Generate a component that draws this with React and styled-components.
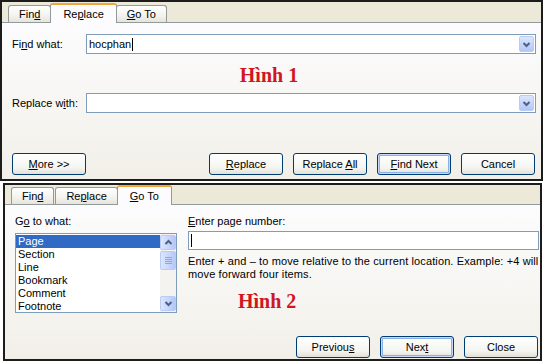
import React from 'react'
import styled, { createGlobalStyle, css } from 'styled-components'

const GlobalStyle = createGlobalStyle`
  html, body {
    margin: 0;
    padding: 0;
    background: #ffffff;
  }
  body {
    font-family: "Liberation Sans", Tahoma, sans-serif;
    font-size: 11px;
    color: #000;
  }
`

const Chevron = ({ up }) => (
  <svg width="9" height="7" viewBox="0 0 9 7">
    <path
      d={up ? 'M1.5 5 L4.5 2 L7.5 5' : 'M1.5 2 L4.5 5 L7.5 2'}
      fill="none"
      stroke="#4D6185"
      strokeWidth="2"
    />
  </svg>
)

const GotoItems = ['Page', 'Section', 'Line', 'Bookmark', 'Comment', 'Footnote']

const App = () => {
  return (
    <>
      <GlobalStyle />
      <Page>
        {/* Hình 1 : Find and Replace, Replace tab */}
        <Dialog $width={543} $margin="0">
          <TabStrip $h={20}>
            <Tab>Fin<Key>d</Key></Tab>
            <Tab $active>Re<Key>p</Key>lace</Tab>
            <Tab><Key>G</Key>o To</Tab>
          </TabStrip>
          <Panel $pad="11px 5px 4px 10px">
            <Row>
              <Label $w={74}>Fi<Key>n</Key>d what:</Label>
              <Combo>
                hocphan<Caret />
                <DropButton><Chevron /></DropButton>
              </Combo>
            </Row>
            <Caption $h={39} $pad="3px 10px 0 0">Hình 1</Caption>
            <Row>
              <Label $w={74}>Replace w<Key>i</Key>th:</Label>
              <Combo>
                <DropButton><Chevron /></DropButton>
              </Combo>
            </Row>
            <ButtonBar $mt={40} $pr={1}>
              <Button><Key>M</Key>ore &gt;&gt;</Button>
              <Button $push><Key>R</Key>eplace</Button>
              <Button>Replace <Key>A</Key>ll</Button>
              <Button $default><Key>F</Key>ind Next</Button>
              <Button>Cancel</Button>
            </ButtonBar>
          </Panel>
        </Dialog>

        {/* Hình 2 : Go To tab */}
        <Dialog $width={539} $margin="2px 0 0 3px">
          <TabStrip $h={19}>
            <Tab>Fin<Key>d</Key></Tab>
            <Tab>Re<Key>p</Key>lace</Tab>
            <Tab $active><Key>G</Key>o To</Tab>
          </TabStrip>
          <Panel $pad="10px 1px 1px 10px">
            <GoToBody>
              <LeftCol>
                <FieldLabel>G<Key>o</Key> to what:</FieldLabel>
                <ListBox>
                  <Items>
                    {GotoItems.map((item, i) => (
                      <ListItem key={item} $selected={i === 0}>{item}</ListItem>
                    ))}
                  </Items>
                  <ScrollBar>
                    <ScrollBtn><Chevron up /></ScrollBtn>
                    <Track>
                      <Thumb>
                        <Grip /><Grip /><Grip /><Grip />
                      </Thumb>
                    </Track>
                    <ScrollBtn><Chevron /></ScrollBtn>
                  </ScrollBar>
                </ListBox>
              </LeftCol>
              <RightCol>
                <FieldLabel><Key>E</Key>nter page number:</FieldLabel>
                <PageInput><Caret /></PageInput>
                <Help>
                  Enter + and – to move relative to the current location. Example: +4 will
                  <br />
                  move forward four items.
                </Help>
                <Caption $h={24} $pad="0 0 0 50px" $align="left" $mt={10}>Hình 2</Caption>
              </RightCol>
            </GoToBody>
            <ButtonBar $mt={21} $pr={1}>
              <Button $push>Previou<Key>s</Key></Button>
              <Button $default>Nex<Key>t</Key></Button>
              <Button>Close</Button>
            </ButtonBar>
          </Panel>
        </Dialog>
      </Page>
    </>
  )
}

const Page = styled.div`
  width: 545px;
  height: 364px;
  display: flex;
  flex-direction: column;
  overflow: hidden;
  background: #fff;
`

const Dialog = styled.div`
  box-sizing: border-box;
  width: ${props => props.$width}px;
  margin: ${props => props.$margin};
  border: 2px solid #1c1c1c;
  background: #ECE9D8;
  display: flex;
  flex-direction: column;
`

const TabStrip = styled.div`
  height: ${props => props.$h}px;
  display: flex;
  align-items: flex-end;
  padding-left: 6px;
  position: relative;
  z-index: 1;
`

const Tab = styled.div`
  box-sizing: border-box;
  height: 17px;
  padding: 0 10px;
  margin-right: 1px;
  display: flex;
  align-items: center;
  border: 1px solid #919B9C;
  border-bottom: none;
  border-radius: 3px 3px 0 0;
  background: linear-gradient(180deg, #FFFFFF 0%, #F3F2EE 60%, #E6E4DA 100%);

  ${props => props.$active && css`
    height: 20px;
    margin: 0 -1px -1px -2px;
    padding: 0 12px;
    border-top: 2px solid #F2A53A;
    background: #FCFCFE;
  `}
`

const Panel = styled.div`
  flex: 1;
  padding: ${props => props.$pad};
  border-top: 1px solid #919B9C;
  background: linear-gradient(180deg, #FCFCFE 0%, #F6F5F1 60%, #F1EFE8 100%);
  display: flex;
  flex-direction: column;
`

const Row = styled.div`
  height: 20px;
  display: flex;
  align-items: center;
`

const Label = styled.div`
  width: ${props => props.$w}px;
  flex: none;
`

const Key = styled.span`
  text-decoration: underline;
  text-underline-offset: 1px;
`

const Combo = styled.div`
  flex: 1;
  height: 20px;
  box-sizing: border-box;
  border: 1px solid #7F9DB9;
  background: #fff;
  display: flex;
  align-items: center;
  padding-left: 2px;
`

const Caret = styled.span`
  display: inline-block;
  width: 1px;
  height: 13px;
  margin-left: 1px;
  background: #000;
`

const DropButton = styled.div`
  margin-left: auto;
  margin-right: 1px;
  width: 15px;
  height: 16px;
  box-sizing: border-box;
  border: 1px solid #BACBF4;
  border-radius: 2px;
  background: linear-gradient(180deg, #DCE6FC 0%, #C3D3FB 60%, #B3C6F4 100%);
  display: grid;
  place-items: center;
`

const Caption = styled.div`
  box-sizing: border-box;
  height: ${props => props.$h}px;
  line-height: ${props => props.$h - 3}px;
  padding: ${props => props.$pad};
  margin-top: ${props => props.$mt || 0}px;
  text-align: ${props => props.$align || 'center'};
  font-family: "Liberation Serif", "Times New Roman", serif;
  font-weight: bold;
  font-size: 20px;
  color: #D2161E;
`

const ButtonBar = styled.div`
  display: flex;
  gap: 10px;
  margin-top: ${props => props.$mt}px;
  padding-right: ${props => props.$pr}px;
`

const Button = styled.button`
  width: 74px;
  height: 22px;
  box-sizing: border-box;
  padding: 0;
  border: 1px solid #003C74;
  border-radius: 3px;
  background: linear-gradient(180deg, #FFFFFF 0%, #F4F4F0 70%, #E3E0D6 100%);
  font-family: inherit;
  font-size: 11px;
  color: #000;
  margin-left: ${props => (props.$push ? 'auto' : '0')};
  ${props => props.$default && css`
    box-shadow: inset 0 0 0 1px #C9DAF8, inset 0 0 0 2px #8CAFE6;
  `}
`

const GoToBody = styled.div`
  display: flex;
  gap: 11px;
`

const LeftCol = styled.div`
  width: 162px;
  flex: none;
`

const RightCol = styled.div`
  flex: 1;
  display: flex;
  flex-direction: column;
`

const FieldLabel = styled.div`
  height: 13px;
  line-height: 13px;
`

const ListBox = styled.div`
  margin-top: 5px;
  height: 80px;
  box-sizing: border-box;
  border: 1px solid #7F9DB9;
  background: #fff;
  display: flex;
`

const Items = styled.div`
  flex: 1;
  padding-top: 1px;
`

const ListItem = styled.div`
  height: 13px;
  line-height: 13px;
  padding-left: 2px;
  background: ${props => (props.$selected ? '#316AC5' : 'transparent')};
  color: ${props => (props.$selected ? '#fff' : '#000')};
`

const ScrollBar = styled.div`
  width: 16px;
  display: flex;
  flex-direction: column;
  background: #F4F3EF;
  padding: 1px 0;
`

const ScrollBtn = styled.div`
  height: 15px;
  box-sizing: border-box;
  border: 1px solid #BACBF4;
  border-radius: 2px;
  background: linear-gradient(90deg, #DCE6FC 0%, #C3D3FB 60%, #B3C6F4 100%);
  display: grid;
  place-items: center;
`

const Track = styled.div`
  flex: 1;
  padding-top: 1px;
`

const Thumb = styled.div`
  height: 19px;
  box-sizing: border-box;
  border: 1px solid #BACBF4;
  border-radius: 2px;
  background: linear-gradient(90deg, #DCE6FC 0%, #C6D5FB 60%, #B6C8F5 100%);
  display: flex;
  flex-direction: column;
  justify-content: center;
  align-items: center;
  gap: 1px;
`

const Grip = styled.div`
  width: 7px;
  height: 1px;
  background: #8EA6E0;
`

const PageInput = styled.div`
  margin-top: 3px;
  height: 19px;
  box-sizing: border-box;
  border: 1px solid #7F9DB9;
  background: #fff;
  display: flex;
  align-items: center;
  padding-left: 1px;
`

const Help = styled.div`
  margin-top: 5px;
  line-height: 13px;
  white-space: nowrap;
  letter-spacing: 0.12px;
`

export default App
